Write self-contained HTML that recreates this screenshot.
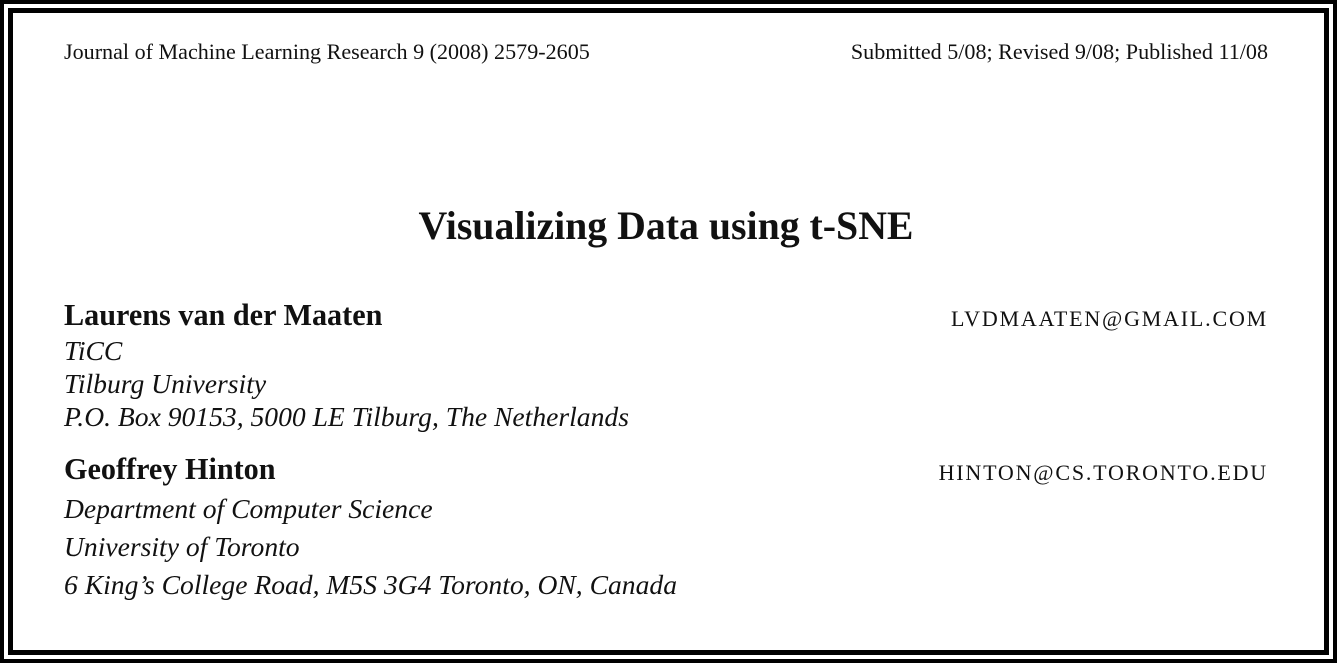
<!DOCTYPE html>
<html><head><style>
html,body{margin:0;padding:0;background:#fff;}
body{width:1337px;height:663px;position:relative;overflow:hidden;font-family:"Liberation Serif",serif;color:#111;}
.b1{position:absolute;left:0;top:0;width:1337px;height:663px;box-sizing:border-box;border:4px solid #000;}
.b2{position:absolute;left:8px;top:8px;width:1321px;height:647px;box-sizing:border-box;border:5px solid #000;}
.t{position:absolute;white-space:nowrap;}
.h{font-size:22.1px;top:39px;}
.n{font-size:30.2px;font-weight:bold;}
.i{font-size:27.6px;font-style:italic;}
.e{font-size:22px;letter-spacing:1.8px;}
</style></head><body>
<div class="b1"></div><div class="b2"></div>
<div class="t h" style="left:64px">Journal of Machine Learning Research 9 (2008) 2579-2605</div>
<div class="t h" style="right:69px">Submitted 5/08; Revised 9/08; Published 11/08</div>
<div class="t" style="left:0;width:1332px;text-align:center;top:203px;font-size:39.8px;font-weight:bold">Visualizing Data using t-SNE</div>
<div class="t n" style="left:64px;top:298px">Laurens van der Maaten</div>
<div class="t e" style="right:69px;top:306px">LVDMAATEN@GMAIL.COM</div>
<div class="t i" style="left:64px;top:335px">TiCC</div>
<div class="t i" style="left:64px;top:368px">Tilburg University</div>
<div class="t i" style="left:64px;top:401px">P.O. Box 90153, 5000 LE Tilburg, The Netherlands</div>
<div class="t n" style="left:64px;top:452px">Geoffrey Hinton</div>
<div class="t e" style="right:69px;top:460px">HINTON@CS.TORONTO.EDU</div>
<div class="t i" style="left:64px;top:493px">Department of Computer Science</div>
<div class="t i" style="left:64px;top:531px">University of Toronto</div>
<div class="t i" style="left:64px;top:569px">6 King’s College Road, M5S 3G4 Toronto, ON, Canada</div>
</body></html>
